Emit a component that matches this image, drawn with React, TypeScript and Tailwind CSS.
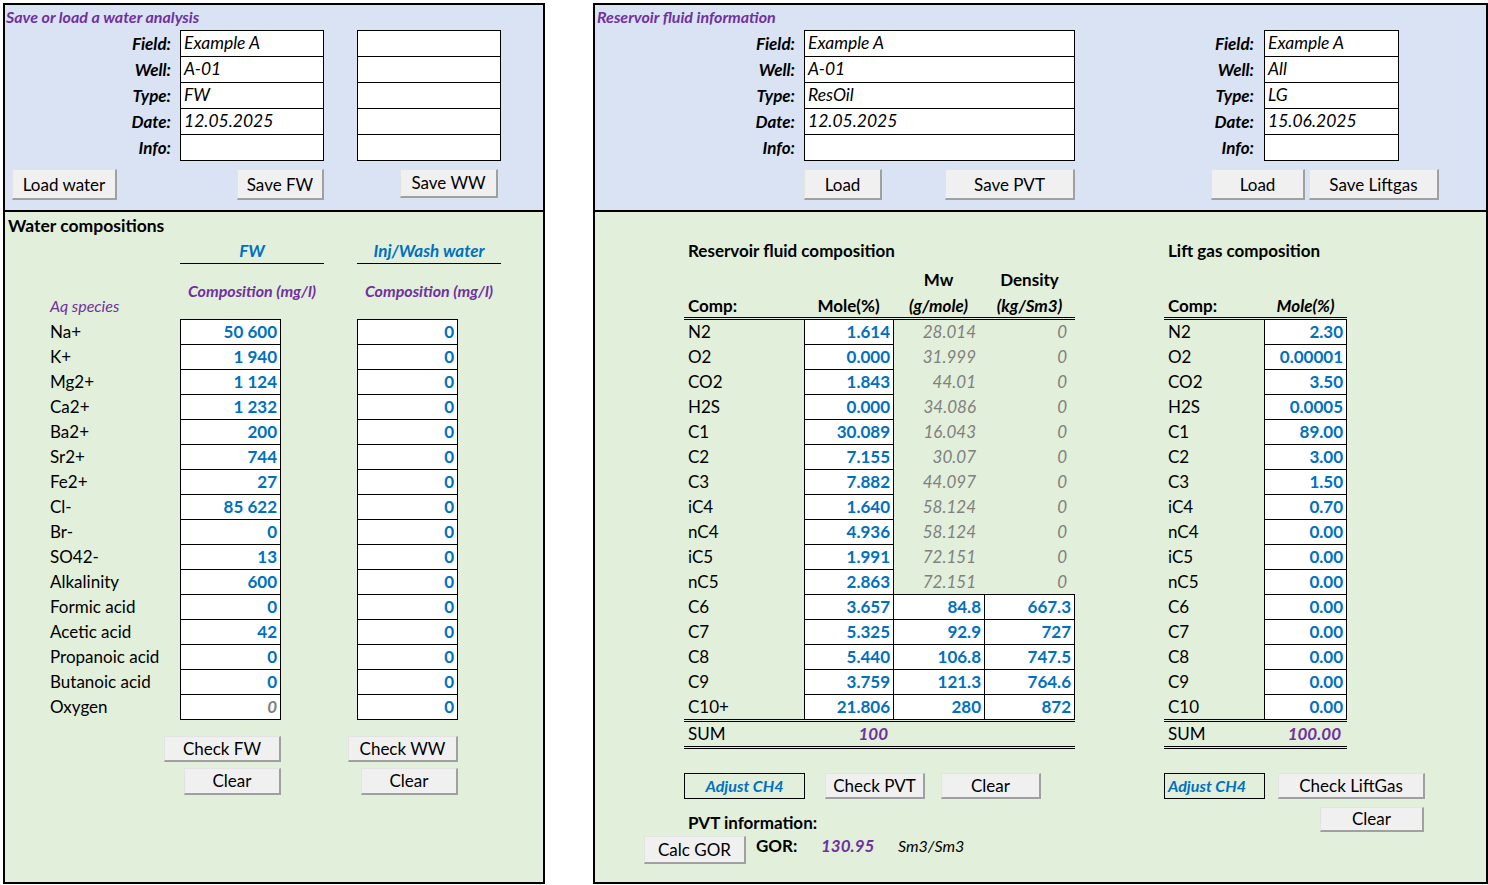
import React from "react";

type Kids = { className?: string; children?: React.ReactNode };

function Btn({ className = "", children }: Kids) {
  return (
    <div
      className={`flex items-center justify-center bg-[#f0f0f0] border-t border-l border-r-2 border-b-2 border-t-[#e3e3e3] border-l-[#e3e3e3] border-r-[#a0a0a0] border-b-[#a0a0a0] text-[17px] text-black ${className}`}
    >
      {children}
    </div>
  );
}

function Cell({ className = "", children }: Kids) {
  return <div className={`flex items-center border border-black bg-white ${className}`}>{children}</div>;
}

const waterInfo = [
  ["Field:", "Example A"],
  ["Well:", "A-01"],
  ["Type:", "FW"],
  ["Date:", "12.05.2025"],
  ["Info:", ""],
];

const water = [
  ["Na+", "50 600"],
  ["K+", "1 940"],
  ["Mg2+", "1 124"],
  ["Ca2+", "1 232"],
  ["Ba2+", "200"],
  ["Sr2+", "744"],
  ["Fe2+", "27"],
  ["Cl-", "85 622"],
  ["Br-", "0"],
  ["SO42-", "13"],
  ["Alkalinity", "600"],
  ["Formic acid", "0"],
  ["Acetic acid", "42"],
  ["Propanoic acid", "0"],
  ["Butanoic acid", "0"],
  ["Oxygen", "0"],
];

const resInfo = [
  ["Field:", "Example A", "Example A"],
  ["Well:", "A-01", "All"],
  ["Type:", "ResOil", "LG"],
  ["Date:", "12.05.2025", "15.06.2025"],
  ["Info:", "", ""],
];

const pvt = [
  ["N2", "1.614", "28.014", "0"],
  ["O2", "0.000", "31.999", "0"],
  ["CO2", "1.843", "44.01", "0"],
  ["H2S", "0.000", "34.086", "0"],
  ["C1", "30.089", "16.043", "0"],
  ["C2", "7.155", "30.07", "0"],
  ["C3", "7.882", "44.097", "0"],
  ["iC4", "1.640", "58.124", "0"],
  ["nC4", "4.936", "58.124", "0"],
  ["iC5", "1.991", "72.151", "0"],
  ["nC5", "2.863", "72.151", "0"],
  ["C6", "3.657", "84.8", "667.3"],
  ["C7", "5.325", "92.9", "727"],
  ["C8", "5.440", "106.8", "747.5"],
  ["C9", "3.759", "121.3", "764.6"],
  ["C10+", "21.806", "280", "872"],
];

const lift = [
  ["N2", "2.30"],
  ["O2", "0.00001"],
  ["CO2", "3.50"],
  ["H2S", "0.0005"],
  ["C1", "89.00"],
  ["C2", "3.00"],
  ["C3", "1.50"],
  ["iC4", "0.70"],
  ["nC4", "0.00"],
  ["iC5", "0.00"],
  ["nC5", "0.00"],
  ["C6", "0.00"],
  ["C7", "0.00"],
  ["C8", "0.00"],
  ["C9", "0.00"],
  ["C10", "0.00"],
];

function WaterPanel() {
  return (
    <div className="flex h-[881px] w-[542px] shrink-0 flex-col border-2 border-black">
      <div className="h-[207px] border-b-2 border-black bg-[#dae3f3]">
        <div className="h-[25px] pl-[1px] pt-[3px] text-[16px] leading-[18px] font-bold italic text-[#7030a0]">
          Save or load a water analysis
        </div>
        <div>
          {waterInfo.map(([label, value]) => (
            <div key={label} className="-mt-px flex first:mt-0">
              <div className="flex w-[175px] items-center justify-end pr-[9px] text-[17px] font-bold italic">{label}</div>
              <Cell className="h-[27px] w-[144px] pl-[3px] text-[17.5px] italic">{value}</Cell>
              <Cell className="ml-[33px] h-[27px] w-[144px]" />
            </div>
          ))}
        </div>
        <div className="mt-[8px] flex items-start">
          <Btn className="ml-[7px] h-[31px] w-[105px] pt-[2px]">Load water</Btn>
          <Btn className="ml-[120px] h-[31px] w-[87px] pt-[2px]">Save FW</Btn>
          <Btn className="ml-[76px] h-[29px] w-[98px]">Save WW</Btn>
        </div>
      </div>

      <div className="flex-1 bg-[#e2efda]">
        <div className="h-[28px] pl-[3px] text-[17.5px] leading-[28px] font-bold">Water compositions</div>
        <div className="flex h-[24px]">
          <div className="w-[175px]" />
          <div className="w-[144px] border-b border-black text-center text-[17px] leading-[22px] font-bold italic text-[#0070c0]">FW</div>
          <div className="ml-[33px] w-[144px] border-b border-black text-center text-[17px] leading-[22px] font-bold italic text-[#0070c0]">
            Inj/Wash water
          </div>
        </div>
        <div className="flex h-[55px]">
          <div className="flex w-[175px] items-end pb-[4px] pl-[45px] text-[16px] leading-[18px] italic text-[#7030a0]">Aq species</div>
          <div className="w-[144px] pt-[18px] text-center text-[16px] leading-[18px] font-bold italic text-[#7030a0]">Composition (mg/l)</div>
          <div className="ml-[33px] w-[144px] pt-[18px] text-center text-[16px] leading-[18px] font-bold italic text-[#7030a0]">
            Composition (mg/l)
          </div>
        </div>
        <div>
          {water.map(([name, v]) => (
            <div key={name} className="-mt-px flex first:mt-0">
              <div className="flex w-[175px] items-center pl-[45px] text-[17px]">{name}</div>
              <Cell
                className={`h-[26px] w-[101px] justify-end pr-[3px] text-[17px] font-bold ${
                  name === "Oxygen" ? "italic text-[#808080]" : "text-[#0070c0]"
                }`}
              >
                {v}
              </Cell>
              <Cell className="ml-[76px] h-[26px] w-[101px] justify-end pr-[3px] text-[17px] font-bold text-[#0070c0]">0</Cell>
            </div>
          ))}
        </div>
        <div className="mt-[16px] flex">
          <Btn className="ml-[159px] h-[26px] w-[117px]">Check FW</Btn>
          <Btn className="ml-[67px] h-[26px] w-[110px]">Check WW</Btn>
        </div>
        <div className="mt-[6px] flex">
          <Btn className="ml-[179px] h-[27px] w-[97px]">Clear</Btn>
          <Btn className="ml-[80px] h-[27px] w-[97px]">Clear</Btn>
        </div>
      </div>
    </div>
  );
}

function FluidPanel() {
  return (
    <div className="ml-[48px] flex h-[881px] w-[895px] shrink-0 flex-col border-2 border-black">
      <div className="h-[207px] border-b-2 border-black bg-[#dae3f3]">
        <div className="h-[25px] pl-[2px] pt-[3px] text-[16px] leading-[18px] font-bold italic text-[#7030a0]">
          Reservoir fluid information
        </div>
        <div>
          {resInfo.map(([label, a, b]) => (
            <div key={label} className="-mt-px flex first:mt-0">
              <div className="flex w-[209px] items-center justify-end pr-[9px] text-[17px] font-bold italic">{label}</div>
              <Cell className="h-[27px] w-[271px] pl-[3px] text-[17.5px] italic">{a}</Cell>
              <div className="flex w-[189px] items-center justify-end pr-[10px] text-[17px] font-bold italic">{label}</div>
              <Cell className="h-[27px] w-[135px] pl-[3px] text-[17.5px] italic">{b}</Cell>
            </div>
          ))}
        </div>
        <div className="mt-[8px] flex">
          <Btn className="ml-[209px] h-[31px] w-[78px] pt-[2px]">Load</Btn>
          <Btn className="ml-[63px] h-[31px] w-[130px] pt-[2px]">Save PVT</Btn>
          <Btn className="ml-[136px] h-[31px] w-[94px] pt-[2px]">Load</Btn>
          <Btn className="ml-[4px] h-[31px] w-[130px] pt-[2px]">Save Liftgas</Btn>
        </div>
      </div>

      <div className="flex flex-1 bg-[#e2efda] pt-[27px]">
        {/* reservoir fluid */}
        <div className="ml-[49px] w-[431px]">
          <div className="ml-[40px] w-[391px]">
            <div className="h-[24px] pl-[4px] text-[17px] leading-[24px] font-bold">Reservoir fluid composition</div>
            <div className="flex h-[29px] items-end text-[17px] leading-[24px] font-bold">
              <div className="w-[209px]" />
              <div className="w-[91px] text-center">Mw</div>
              <div className="w-[91px] text-center">Density</div>
            </div>
            <div className="flex h-[28px] items-end border-b-[3px] border-double border-black leading-[22px] font-bold">
              <div className="w-[120px] pl-[4px] text-[17px]">Comp:</div>
              <div className="w-[89px] text-center text-[17px]">Mole(%)</div>
              <div className="w-[91px] text-center text-[17px] italic">(g/mole)</div>
              <div className="w-[91px] text-center text-[17px] italic">(kg/Sm3)</div>
            </div>
            {pvt.map(([c, m, mw, d], i) => (
              <div key={c} className="-mt-px flex">
                <div className="flex w-[120px] items-center pl-[4px] text-[17px]">{c}</div>
                <Cell className="h-[26px] w-[90px] justify-end pr-[3px] text-[17px] font-bold text-[#0070c0]">{m}</Cell>
                {i >= 11 ? (
                  <>
                    <Cell className="-ml-px h-[26px] w-[92px] justify-end pr-[3px] text-[17px] font-bold text-[#0070c0]">{mw}</Cell>
                    <Cell className="-ml-px h-[26px] w-[91px] justify-end pr-[3px] text-[17px] font-bold text-[#0070c0]">{d}</Cell>
                  </>
                ) : (
                  <>
                    <div className="flex h-[26px] w-[90px] items-center justify-end pr-[8px] text-[17px] italic text-[#808080]">{mw}</div>
                    <div className="flex h-[26px] w-[91px] items-center justify-end pr-[8px] text-[17px] italic text-[#808080]">{d}</div>
                  </>
                )}
              </div>
            ))}
            <div className="-mt-px flex h-[30px] items-center border-y-[3px] border-double border-black">
              <div className="w-[120px] pl-[4px] text-[17px]">SUM</div>
              <div className="w-[90px] pr-[6px] text-right text-[17px] font-bold italic text-[#7030a0]">100</div>
            </div>
          </div>
          <div className="mt-[24px] flex">
            <div className="ml-[40px] flex h-[26px] w-[121px] items-center justify-center border border-black text-[16px] font-bold italic text-[#0070c0]">
              Adjust CH4
            </div>
            <Btn className="ml-[20px] h-[26px] w-[100px]">Check PVT</Btn>
            <Btn className="ml-[16px] h-[26px] w-[100px]">Clear</Btn>
          </div>
          <div className="ml-[44px] mt-[12px] h-[24px] text-[17px] leading-[24px] font-bold">PVT information:</div>
          <div className="mt-[1px] flex items-start">
            <Btn className="h-[28px] w-[102px]">Calc GOR</Btn>
            <div className="ml-[10px] w-[65px] text-[17px] leading-[20px] font-bold">GOR:</div>
            <div className="w-[77px] text-[17px] leading-[20px] font-bold italic text-[#7030a0]">130.95</div>
            <div className="text-[16px] leading-[20px] italic">Sm3/Sm3</div>
          </div>
        </div>

        {/* lift gas */}
        <div className="ml-[89px] w-[261px]">
          <div className="w-[183px]">
            <div className="h-[24px] pl-[4px] text-[17px] leading-[24px] font-bold">Lift gas composition</div>
            <div className="h-[29px]" />
            <div className="flex h-[28px] items-end border-b-[3px] border-double border-black leading-[22px] font-bold">
              <div className="w-[100px] pl-[4px] text-[17px]">Comp:</div>
              <div className="w-[83px] text-center text-[17px] italic">Mole(%)</div>
            </div>
            {lift.map(([c, v]) => (
              <div key={c} className="-mt-px flex">
                <div className="flex w-[100px] items-center pl-[4px] text-[17px]">{c}</div>
                <Cell className="h-[26px] w-[83px] justify-end pr-[3px] text-[17px] font-bold text-[#0070c0]">{v}</Cell>
              </div>
            ))}
            <div className="-mt-px flex h-[30px] items-center border-y-[3px] border-double border-black">
              <div className="w-[100px] pl-[4px] text-[17px]">SUM</div>
              <div className="w-[83px] pr-[6px] text-right text-[17px] font-bold italic text-[#7030a0]">100.00</div>
            </div>
          </div>
          <div className="mt-[24px] flex">
            <div className="flex h-[26px] w-[101px] items-center border border-black pl-[3px] text-[16px] font-bold italic text-[#0070c0]">
              Adjust CH4
            </div>
            <Btn className="ml-[13px] h-[26px] w-[147px]">Check LiftGas</Btn>
          </div>
          <Btn className="ml-[156px] mt-[8px] h-[25px] w-[104px]">Clear</Btn>
        </div>
      </div>
    </div>
  );
}

export default function App() {
  return (
    <div className="flex h-[885px] w-[1488px] overflow-hidden bg-white pl-[3px] pt-[3px] font-[Lato,sans-serif] text-black">
      <WaterPanel />
      <FluidPanel />
    </div>
  );
}
